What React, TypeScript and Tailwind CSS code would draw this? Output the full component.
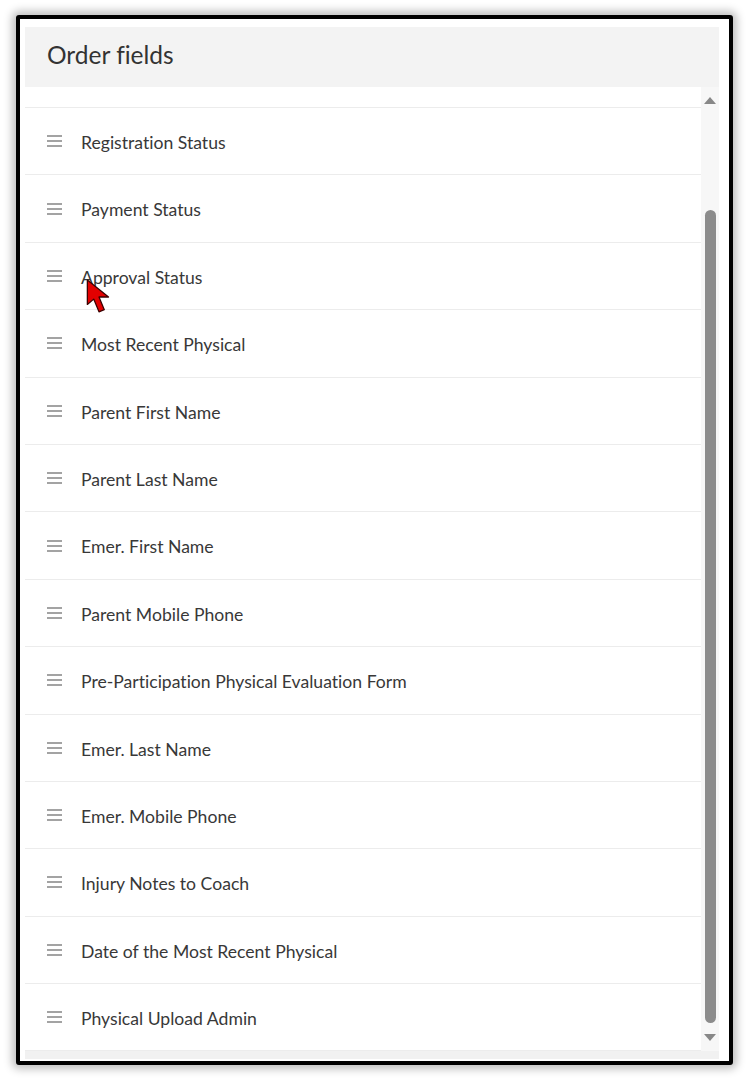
import React from "react";

const fields = [
  "Registration Status",
  "Payment Status",
  "Approval Status",
  "Most Recent Physical",
  "Parent First Name",
  "Parent Last Name",
  "Emer. First Name",
  "Parent Mobile Phone",
  "Pre-Participation Physical Evaluation Form",
  "Emer. Last Name",
  "Emer. Mobile Phone",
  "Injury Notes to Coach",
  "Date of the Most Recent Physical",
  "Physical Upload Admin",
];

function DragHandle() {
  return (
    <div className="flex w-[15px] flex-col gap-[3px]">
      <span className="h-[2px] w-full bg-[#a3a3a3]" />
      <span className="h-[2px] w-full bg-[#a3a3a3]" />
      <span className="h-[2px] w-full bg-[#a3a3a3]" />
    </div>
  );
}

function Cursor() {
  return (
    <svg width="28" height="36" viewBox="0 0 26 34" className="pointer-events-none absolute left-[85px] top-[279px]">
      <path d="M2 1 L2 24 L8 19 L13 31 L18 29 L13 17 L22 17 Z" fill="#e30000" stroke="#3a0000" strokeWidth="1.2" strokeLinejoin="round" />
    </svg>
  );
}

export default function App() {
  return (
    <div
      className="relative min-h-[1080px] bg-white pl-[16px] pt-[15px] [font-variant-ligatures:none]"
      style={{ fontFamily: "Lato, 'Open Sans', sans-serif" }}
    >
      <div className="flex h-[1050px] w-[717px] flex-col rounded-[3px] border-[4px] border-black bg-white pb-[2px] pl-[5px] pr-[10px] pt-[8px] shadow-[0_0_8px_4px_rgba(0,0,0,0.25)]">
        <div className="flex h-[60px] shrink-0 items-center bg-[#f3f3f3] pb-[4px] pl-[22px]">
          <h1 className="text-[24.5px] text-[#333]">Order fields</h1>
        </div>
        <div className="flex min-h-0 flex-1 bg-[#f1f1f1] pb-[8px]">
          <div className="flex-1 bg-white">
            <div className="h-[21px] border-b border-[#ececec]" />
            {fields.map((f) => (
              <div key={f} className="flex h-[67.4px] items-center gap-[19px] border-b border-[#ececec] pl-[22px]">
                <DragHandle />
                <span className="translate-y-[1.5px] text-[17.6px] text-[#383838]">{f}</span>
              </div>
            ))}
          </div>
          <div className="flex w-[18px] flex-col items-center bg-[#f7f7f7] pt-[10px]">
            <div className="h-0 w-0 border-x-[6px] border-b-[7px] border-x-transparent border-b-[#888]" />
            <div className="mt-[106px] h-[813px] w-[11px] rounded-full bg-[#8c8c8c]" />
            <div className="mt-[11px] h-0 w-0 border-x-[6px] border-t-[7px] border-x-transparent border-t-[#888]" />
          </div>
        </div>
      </div>
      <Cursor />
    </div>
  );
}
